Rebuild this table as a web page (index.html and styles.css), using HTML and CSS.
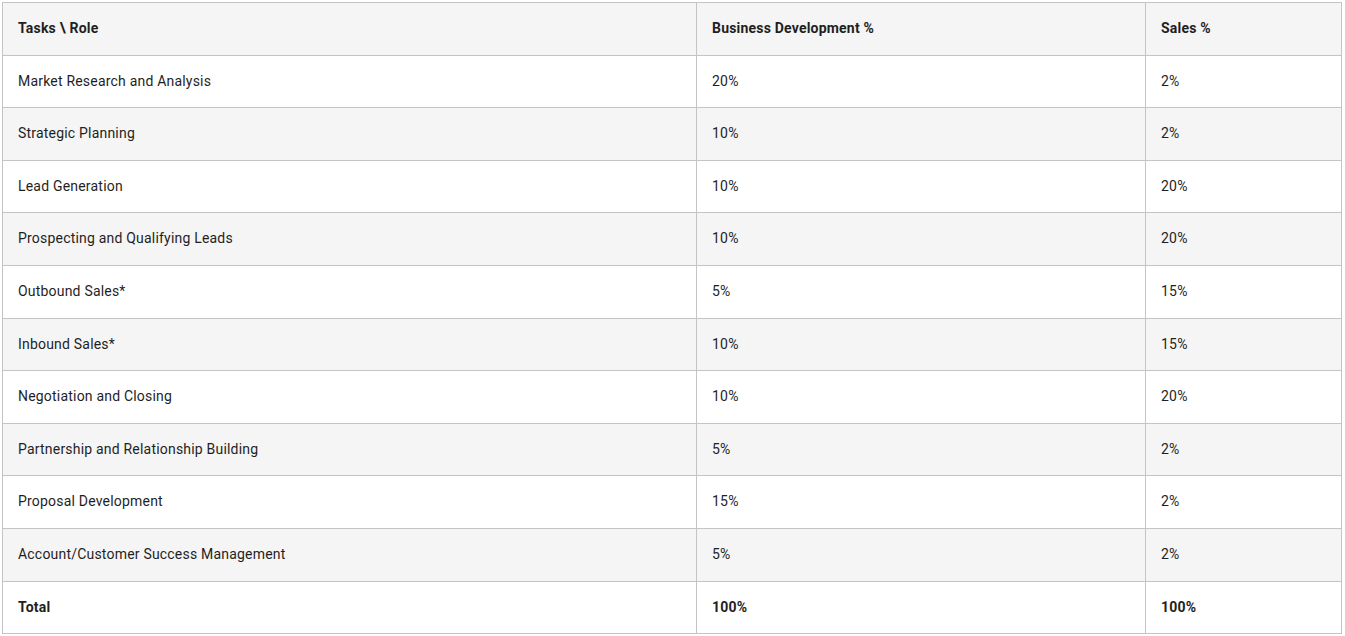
FILE: index.html
```html
<!DOCTYPE html>
<html>
<head>
<meta charset="utf-8">
<link rel="stylesheet" href="styles.css">
</head>
<body>
<div class="wrap">
<table class="grid">
<colgroup><col class="c1"><col class="c2"><col class="c3"></colgroup>
<thead>
<tr><th>Tasks \ Role</th><th>Business Development %</th><th>Sales %</th></tr>
</thead>
<tbody>
<tr><td>Market Research and Analysis</td><td>20%</td><td>2%</td></tr>
<tr><td>Strategic Planning</td><td>10%</td><td>2%</td></tr>
<tr><td>Lead Generation</td><td>10%</td><td>20%</td></tr>
<tr><td>Prospecting and Qualifying Leads</td><td>10%</td><td>20%</td></tr>
<tr><td>Outbound Sales*</td><td>5%</td><td>15%</td></tr>
<tr><td>Inbound Sales*</td><td>10%</td><td>15%</td></tr>
<tr><td>Negotiation and Closing</td><td>10%</td><td>20%</td></tr>
<tr><td>Partnership and Relationship Building</td><td>5%</td><td>2%</td></tr>
<tr><td>Proposal Development</td><td>15%</td><td>2%</td></tr>
<tr><td>Account/Customer Success Management</td><td>5%</td><td>2%</td></tr>
<tr class="total"><td>Total</td><td>100%</td><td>100%</td></tr>
</tbody>
</table>
</div>
</body>
</html>
```
FILE: styles.css
```css
html, body {
  margin: 0;
  padding: 0;
  background: #ffffff;
}
.wrap {
  padding: 2px 0 0 2px;
}
.grid {
  border-collapse: collapse;
  width: 1339px;
  table-layout: fixed;
  font-family: Roboto, "Liberation Sans", Arial, sans-serif;
  font-size: 14px;
  line-height: 19.6px;
  letter-spacing: 0.2px;
  color: #1f1f1f;
}
.c1 { width: 694px; }
.c2 { width: 449px; }
.c3 { width: 196px; }
.grid th, .grid td {
  border: 1px solid #c4c4c4;
  padding: 16px 15px;
  text-align: left;
  vertical-align: top;
}
.grid th {
  font-weight: 700;
  background: #f5f5f5;
}
.grid tbody tr:nth-child(even) td {
  background: #f5f5f5;
}
.grid .total td {
  font-weight: 700;
}
```
